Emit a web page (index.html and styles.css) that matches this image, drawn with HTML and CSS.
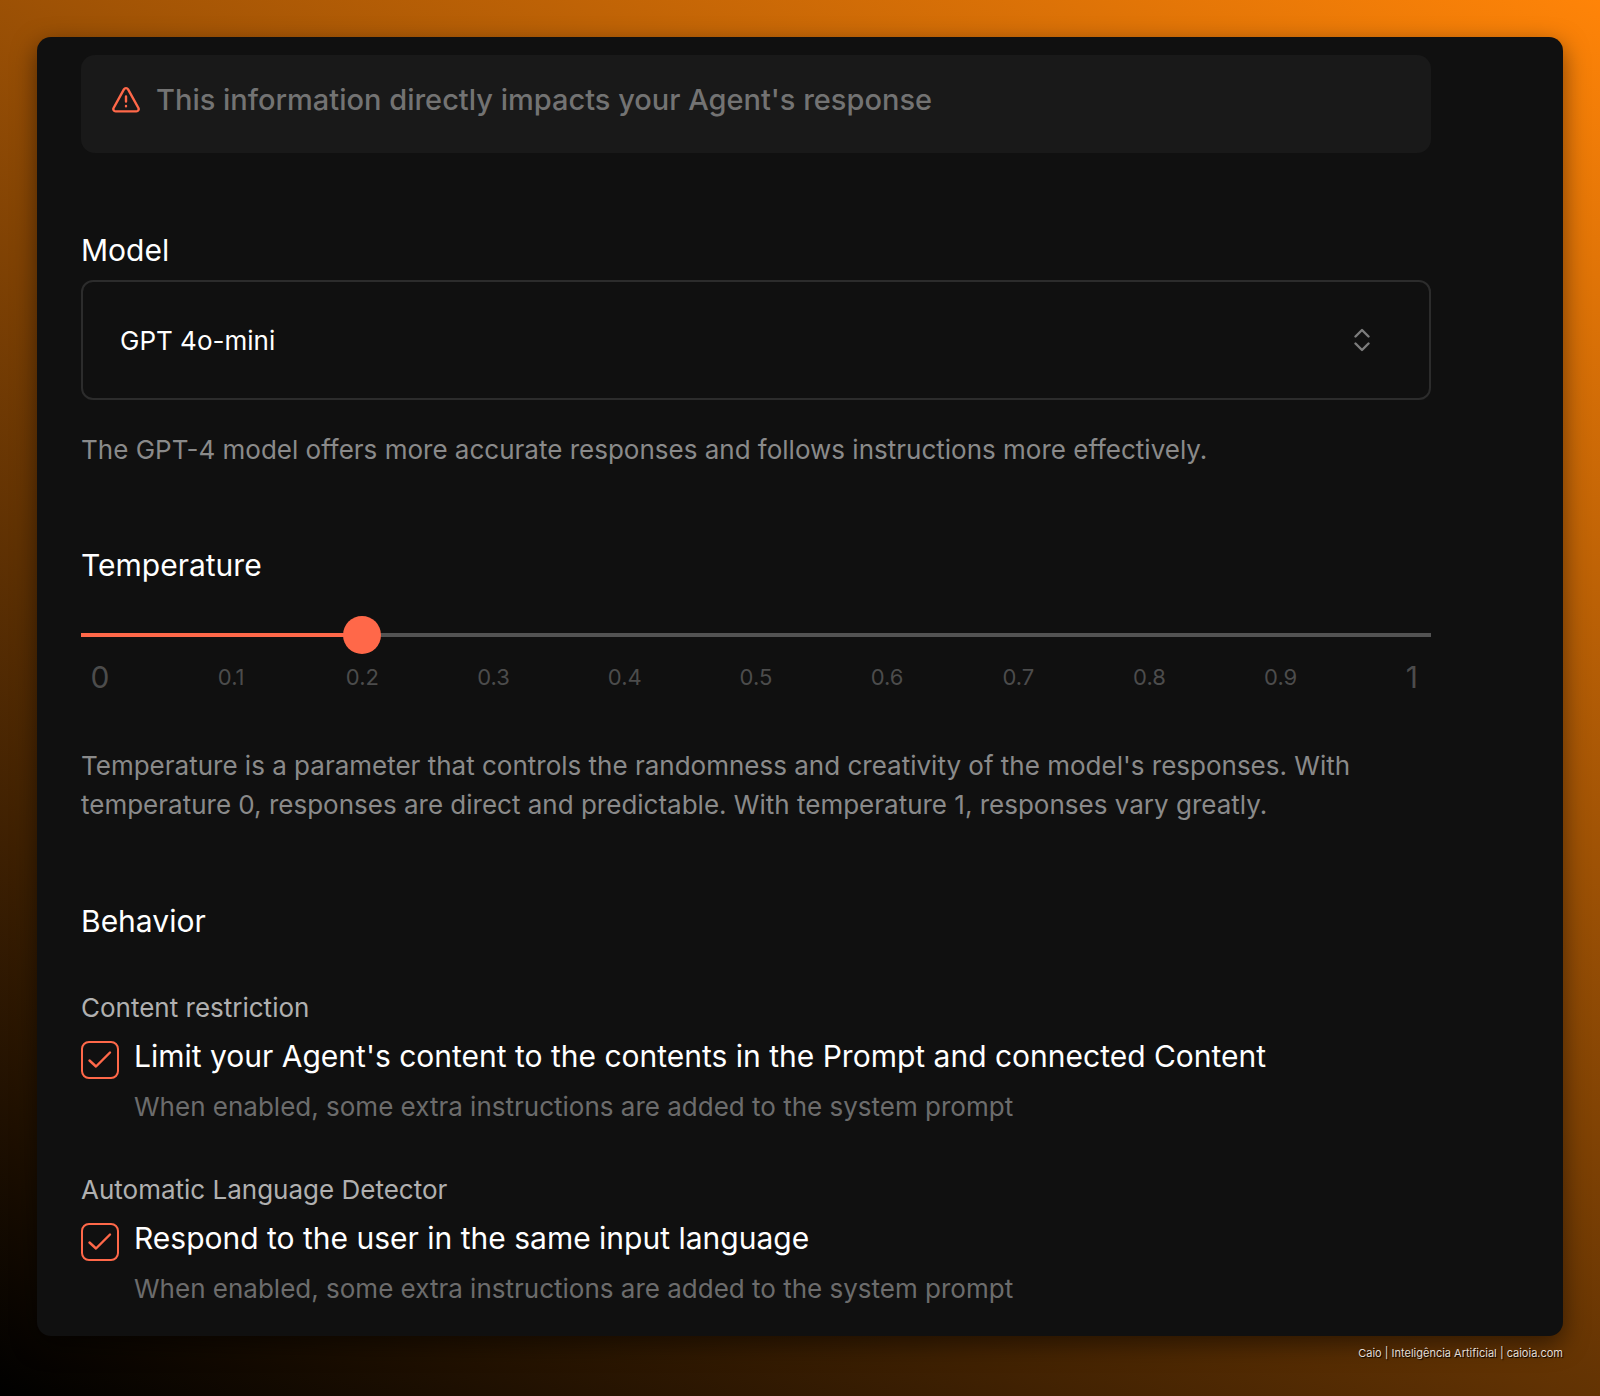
FILE: index.html
```html
<!DOCTYPE html>
<html lang="en">
<head>
<meta charset="utf-8">
<meta name="viewport" content="width=device-width, initial-scale=1">
<title>Agent settings</title>
<link rel="stylesheet" href="styles.css">
</head>
<body>
<main class="panel">
  <form class="settings">
    <div class="notice" role="note">
      <svg class="notice-icon" viewBox="0 0 28 28" aria-hidden="true">
        <path d="M11.9 3.4 1.6 22a2.3 2.3 0 0 0 2 3.4h20.800a2.3 2.3 0 0 0 2-3.4L16.100 3.400a2.400 2.400 0 0 0-4.200 0Z"/>
        <path d="M14 10.500v5M14 20v.2"/>
      </svg>
      <p class="notice-text">This information directly impacts your Agent's response</p>
    </div>

    <section class="model">
      <label class="heading" for="model">Model</label>
      <div class="select">
        <select class="select-field" id="model">
          <option>GPT 4o-mini</option>
          <option>GPT 4</option>
        </select>
        <svg class="select-icon" viewBox="0 0 16 24" aria-hidden="true">
          <path d="M1.500 8.500 8 2l6.500 6.500M1.500 15.500 8 22l6.500-6.500"/>
        </svg>
      </div>
      <p class="description">The GPT-4 model offers more accurate responses and follows instructions more effectively.</p>
    </section>

    <section class="temperature">
      <label class="heading" for="temperature">Temperature</label>
      <input class="slider" id="temperature" type="range" min="0" max="1" step="0.1" value="0.2">
      <div class="scale" aria-hidden="true">
        <span class="tick tick-end">0</span>
        <span class="tick">0.1</span>
        <span class="tick">0.2</span>
        <span class="tick">0.3</span>
        <span class="tick">0.4</span>
        <span class="tick">0.5</span>
        <span class="tick">0.6</span>
        <span class="tick">0.7</span>
        <span class="tick">0.8</span>
        <span class="tick">0.9</span>
        <span class="tick tick-end">1</span>
      </div>
      <p class="description">Temperature is a parameter that controls the randomness and creativity of the model's responses. With temperature 0, responses are direct and predictable. With temperature 1, responses vary greatly.</p>
    </section>

    <section class="behavior">
      <h2 class="heading">Behavior</h2>
      <div class="option">
        <h3 class="option-title">Content restriction</h3>
        <div class="option-row">
          <span class="check">
            <input class="check-box" id="restrict" type="checkbox" checked>
            <svg class="check-mark" viewBox="0 0 38 38" aria-hidden="true"><path d="m8.500 19.500 6.500 6L29 11.500"/></svg>
          </span>
          <label class="option-label" for="restrict">Limit your Agent's content to the contents in the Prompt and connected Content</label>
        </div>
        <p class="option-note">When enabled, some extra instructions are added to the system prompt</p>
      </div>
      <div class="option">
        <h3 class="option-title">Automatic Language Detector</h3>
        <div class="option-row">
          <span class="check">
            <input class="check-box" id="language" type="checkbox" checked>
            <svg class="check-mark" viewBox="0 0 38 38" aria-hidden="true"><path d="m8.500 19.500 6.500 6L29 11.500"/></svg>
          </span>
          <label class="option-label" for="language">Respond to the user in the same input language</label>
        </div>
        <p class="option-note">When enabled, some extra instructions are added to the system prompt</p>
      </div>
    </section>
  </form>
</main>
<footer class="credit">Caio | Inteligência Artificial | caioia.com</footer>
</body>
</html>
```
FILE: styles.css
```css
:root {
  --accent: #ff6849;
  --surface: #101010;
}

* {
  box-sizing: border-box;
}

body {
  margin: 0;
  min-height: 100vh;
  padding: 37px 37px 0;
  background: linear-gradient(29deg, #000 0%, #ff8408 100%);
  color: #fff;
  font-family: Inter, "Liberation Sans", sans-serif;
}

h2, h3, p {
  margin: 0;
  font-weight: 400;
}

.panel {
  padding: 18px 132px 27px 44px;
  border-radius: 14px;
  background: var(--surface);
  box-shadow: 0 8px 24px rgba(0, 0, 0, 0.5);
}

.settings {
  display: flex;
  flex-direction: column;
}

.notice {
  display: flex;
  align-items: center;
  gap: 16px;
  padding: 27px 31px 35px;
  border-radius: 14px;
  background: #191919;
}

.notice-icon {
  flex: none;
  width: 28px;
  height: 28px;
  fill: none;
  stroke: var(--accent);
  stroke-width: 2.4;
  stroke-linecap: round;
  stroke-linejoin: round;
}

.notice-text {
  color: #737373;
  font-size: 29px;
  font-weight: 500;
  line-height: 36px;
}

.heading {
  display: block;
  font-size: 30px;
  line-height: 40px;
}

.description {
  color: #8a8a8a;
  font-size: 26px;
  line-height: 39px;
}

.model {
  margin-top: 77px;
}

.select {
  display: grid;
  align-items: center;
  margin: 10px 0 30px;
}

.select-field {
  grid-area: 1 / 1;
  width: 100%;
  height: 120px;
  padding: 0 37px;
  appearance: none;
  border: 2px solid #2c2c2c;
  border-radius: 12px;
  background: transparent;
  color: #fff;
  font: inherit;
  font-size: 26px;
}

.select-icon {
  grid-area: 1 / 1;
  justify-self: end;
  width: 16px;
  height: 24px;
  margin-right: 61px;
  fill: none;
  stroke: #7c7c7c;
  stroke-width: 2.4;
  stroke-linecap: round;
  stroke-linejoin: round;
  pointer-events: none;
}

.temperature {
  margin-top: 76px;
}

.slider {
  display: block;
  width: 100%;
  height: 38px;
  margin: 31px 0 3px;
  appearance: none;
  background: linear-gradient(90deg, var(--accent) 21%, #535353 21%) center / 100% 4px no-repeat;
  border-radius: 2px;
}

.slider::-webkit-slider-thumb {
  width: 38px;
  height: 38px;
  appearance: none;
  border: 0;
  border-radius: 50%;
  background: var(--accent);
}

.scale {
  display: flex;
  align-items: center;
  justify-content: space-between;
  margin-bottom: 49px;
  color: #4c4c4c;
  line-height: 40px;
}

.tick {
  display: flex;
  justify-content: center;
  width: 38px;
  font-size: 22px;
}

.tick-end {
  font-size: 30px;
}

.behavior {
  display: flex;
  flex-direction: column;
  gap: 43px;
  margin-top: 77px;
}

.behavior .heading {
  margin-bottom: 4px;
}

.option-title {
  margin-bottom: 8px;
  color: #b0b0b0;
  font-size: 26px;
  line-height: 40px;
}

.option-row {
  display: flex;
  align-items: flex-start;
  gap: 15px;
}

.check {
  display: grid;
  flex: none;
  width: 38px;
  height: 38px;
  margin-top: 5px;
}

.check-box {
  grid-area: 1 / 1;
  width: 100%;
  height: 100%;
  margin: 0;
  appearance: none;
  border: 2px solid var(--accent);
  border-radius: 8px;
}

.check-mark {
  grid-area: 1 / 1;
  fill: none;
  stroke: var(--accent);
  stroke-width: 2.4;
  stroke-linecap: round;
  stroke-linejoin: round;
  pointer-events: none;
}

.check-box:not(:checked) + .check-mark {
  visibility: hidden;
}

.option-label {
  font-size: 30px;
  line-height: 40px;
}

.option-note {
  margin: 8px 0 0 53px;
  color: #6c6c6c;
  font-size: 26px;
  line-height: 40px;
}

.credit {
  padding: 8px 0;
  color: #e4dcd4;
  font-size: 11px;
  line-height: 18px;
  text-align: right;
  text-shadow: 1px 1px 1px #000;
}
```
